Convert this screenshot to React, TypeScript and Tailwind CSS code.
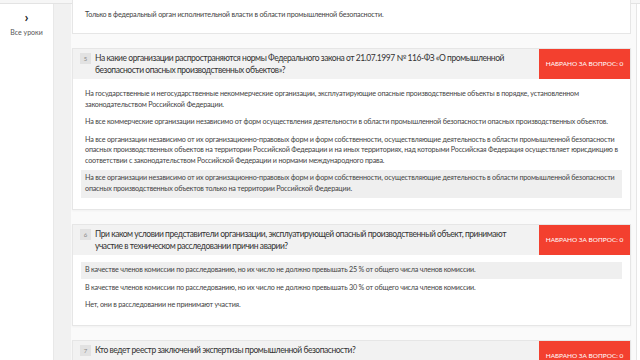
import React from 'react';

interface Answer {
    text: string;
    picked?: boolean;
}

interface Question {
    num: number;
    title: string;
    answers: Answer[];
}

const questions: Question[] = [
    {
        num: 5,
        title: 'На какие организации распространяются нормы Федерального закона от 21.07.1997 № 116-ФЗ «О промышленной безопасности опасных производственных объектов»?',
        answers: [
            { text: 'На государственные и негосударственные некоммерческие организации, эксплуатирующие опасные производственные объекты в порядке, установленном законодательством Российской Федерации.' },
            { text: 'На все коммерческие организации независимо от форм осуществления деятельности в области промышленной безопасности опасных производственных объектов.' },
            { text: 'На все организации независимо от их организационно-правовых форм и форм собственности, осуществляющие деятельность в области промышленной безопасности опасных производственных объектов на территории Российской Федерации и на иных территориях, над которыми Российская Федерация осуществляет юрисдикцию в соответствии с законодательством Российской Федерации и нормами международного права.' },
            { text: 'На все организации независимо от их организационно-правовых форм и форм собственности, осуществляющие деятельность в области промышленной безопасности опасных производственных объектов только на территории Российской Федерации.', picked: true },
        ],
    },
    {
        num: 6,
        title: 'При каком условии представители организации, эксплуатирующей опасный производственный объект, принимают участие в техническом расследовании причин аварии?',
        answers: [
            { text: 'В качестве членов комиссии по расследованию, но их число не должно превышать 25 % от общего числа членов комиссии.', picked: true },
            { text: 'В качестве членов комиссии по расследованию, но их число не должно превышать 30 % от общего числа членов комиссии.' },
            { text: 'Нет, они в расследовании не принимают участия.' },
        ],
    },
    {
        num: 7,
        title: 'Кто ведет реестр заключений экспертизы промышленной безопасности?',
        answers: [],
    },
];

const AnswerList = ({ answers }: { answers: Answer[] }) => (
    <div className="flex flex-col px-[8px] pt-[7px] pb-[11px]">
        {answers.map((a, i) => (
            <div
                key={i}
                className={`px-[4px] py-[3.5px] text-[7.2px] leading-[10.5px] tracking-[-0.2px] text-[#444] ${a.picked ? 'bg-[#efefef]' : ''}`}
            >
                {a.text}
            </div>
        ))}
    </div>
);

const QuestionCard = ({ q }: { q: Question }) => (
    <div className="bg-white border border-[#e6e6e6] shadow-[0_1px_2px_rgba(0,0,0,0.04)]">
        {/* Header */}
        <div className="flex bg-[#f2f2f2]">
            <div className="flex min-h-[30px] flex-1 items-start gap-[4px] py-[3px] pl-[7px] pr-[6px]">
                <span className="mt-[1px] flex h-[11px] w-[11px] shrink-0 items-center justify-center bg-[#e2e2e2] text-[6px] text-[#888]">
                    {q.num}
                </span>
                <span className="text-[8.5px] leading-[12px] tracking-[-0.45px] text-[#333]">{q.title}</span>
            </div>
            <div className="flex w-[91px] shrink-0 items-center justify-center bg-[#f3402f] text-[6.5px] uppercase text-white">
                Набрано за вопрос: 0
            </div>
        </div>
        {q.answers.length > 0 && <AnswerList answers={q.answers} />}
    </div>
);

export default function App() {
    return (
        <div
            className="flex h-[360px] w-[640px] flex-col overflow-hidden bg-white"
            style={{ fontFamily: 'Lato, Roboto, sans-serif' }}
        >
            {/* top bar edge */}
            <div className="h-[4px] shrink-0 border-b border-[#e3e3e3] bg-[#f6f6f6]" />

            <div className="flex min-h-0 flex-1">
                {/* Sidebar */}
                <div className="flex w-[54px] shrink-0 flex-col items-center border-r border-[#e8e8e8] bg-white pt-[6px]">
                    <span className="text-[14px] font-bold leading-[14px] text-[#222]">›</span>
                    <span className="mt-[3px] text-[7px] text-[#555]">Все уроки</span>
                </div>

                {/* gutter */}
                <div className="w-[17px] shrink-0 bg-[#f1f1f1]" />

                {/* Content */}
                <div className="flex min-w-0 flex-1 flex-col gap-[14px] bg-[#fafafa] pl-[1px] pr-[5px]">
                    <div className="-mt-[20px] border border-[#e6e6e6] bg-white">
                        <div className="px-[8px] pt-[21px] pb-[9px]">
                            <div className="px-[4px] py-[3.5px] text-[7.2px] leading-[10.5px] tracking-[-0.2px] text-[#444]">
                                Только в федеральный орган исполнительной власти в области промышленной безопасности.
                            </div>
                        </div>
                    </div>
                    {questions.map(q => (
                        <QuestionCard key={q.num} q={q} />
                    ))}
                </div>

                {/* right edge */}
                <div className="w-[4px] shrink-0 border-l border-[#e6e6e6] bg-white" />
            </div>
        </div>
    );
}
